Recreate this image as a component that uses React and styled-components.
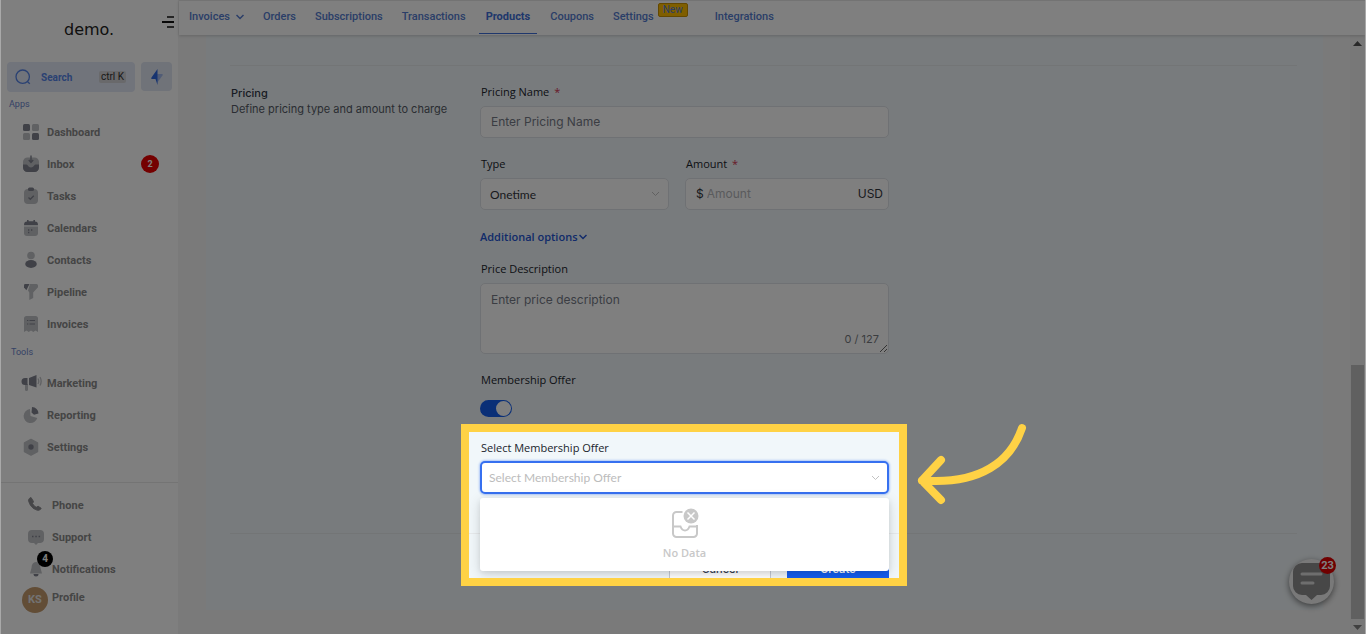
import React from "react";
import styled, { createGlobalStyle } from "styled-components";

const roboto = `Roboto, "Liberation Sans", sans-serif`;
const inter = `Inter, Roboto, sans-serif`;
const openSans = `"Open Sans", "Noto Sans", sans-serif`;
const lato = `Lato, "Open Sans", sans-serif`;

const Global = createGlobalStyle`
  *, *::before, *::after { box-sizing: border-box; }
  body { margin: 0; background: #a9a9a9; font-family: ${roboto}; }
  button, input, select, textarea { font: inherit; margin: 0; }
  ul { list-style: none; margin: 0; padding: 0; }
  a { color: inherit; text-decoration: none; }
`;

const Page = styled.div`
  position: relative;
  display: flex;
  min-height: 100vh;
  margin: 0 1px;
  overflow: hidden;
  background: #f5f5f5;
`;

/* ---------- sidebar ---------- */
const Sidebar = styled.aside`
  flex: none;
  width: 178px;
  display: flex;
  flex-direction: column;
  background: #fff;
  border-right: 1px solid #f4f4f4;
`;
const Brand = styled.header`
  display: flex;
  justify-content: space-between;
  height: 62px;
  padding: 15px 4px 0 63px;
`;
const Logo = styled.a`
  height: 28px;
  font: 16px/30px "DejaVu Sans", sans-serif;
  color: #222;
`;
const MenuButton = styled.button`
  width: 12px;
  height: 14px;
  padding: 0;
  border: 0;
  background: none;
  svg { display: block; }
`;
const SearchRow = styled.div`
  display: flex;
  gap: 6px;
  padding: 0 6px;
`;
const SearchButton = styled.button`
  display: flex;
  align-items: center;
  width: 128px;
  height: 30px;
  padding: 0 9px 0 8px;
  border: 0;
  border-radius: 4px;
  background: #e2e8f6;
  color: #5583e6;
  font-size: 10px;
  font-weight: 700;
  span { margin-left: 10px; }
`;
const Shortcut = styled.kbd`
  margin-left: auto;
  padding: 0 2px;
  border-radius: 2px;
  background: #d2d2d6;
  color: #333;
  font: 10px/12px ${roboto};
`;
const QuickButton = styled.button`
  display: flex;
  align-items: center;
  justify-content: center;
  width: 31px;
  height: 29px;
  padding: 0;
  border: 0;
  border-radius: 4px;
  background: #e0e6f2;
`;
const GroupLabel = styled.h2`
  margin: 0;
  padding: 0 0 ${(p) => p.$below || 0}px ${(p) => p.$indent}px;
  font-size: 9px;
  line-height: 24px;
  font-weight: 400;
  color: #6b85cc;
`;
const NavItem = styled.a`
  position: relative;
  display: flex;
  align-items: center;
  gap: 5px;
  height: 32px;
  padding-left: 19px;
  font-size: 11px;
  font-weight: 700;
  color: #8a8a8a;
  svg { flex: none; }
`;
const CountBadge = styled.span`
  margin: 0 19px 0 auto;
  width: 18px;
  height: 18px;
  border-radius: 9px;
  background: #e80000;
  color: #fff;
  font-size: 9px;
  line-height: 18px;
  text-align: center;
`;
const Spacer = styled.div`
  height: 19px;
`;
const Footer = styled.footer`
  padding: 6px 0 0 5px;
  border-top: 1px solid #e8e8e8;
`;
const BellCount = styled.span`
  position: absolute;
  left: 31px;
  top: -2px;
  width: 16px;
  height: 16px;
  border-radius: 8px;
  background: #000;
  color: #fff;
  font-size: 10px;
  line-height: 16px;
  text-align: center;
`;
const ProfileLink = styled.a`
  display: flex;
  gap: 4px;
  padding-left: 16px;
  font-size: 11px;
  line-height: 26px;
  font-weight: 700;
  color: #8a8a8a;
`;
const Avatar = styled.span`
  width: 26px;
  height: 26px;
  margin-top: 2px;
  border-radius: 13px;
  background: #c49a6c;
  color: #e6e6e6;
  line-height: 26px;
  text-align: center;
`;

/* ---------- top tabs ---------- */
const Main = styled.main`
  flex: 1;
  min-width: 0;
  display: flex;
  flex-direction: column;
`;
const Tabs = styled.nav`
  position: relative;
  z-index: 1;
  display: flex;
  gap: 7px;
  height: 35px;
  padding-left: 4px;
  border-top: 1px solid #e6e6e6;
  background: #fff;
  box-shadow: 0 1px 3px rgba(0, 0, 0, 0.18);
`;
const Tab = styled.a`
  display: flex;
  align-items: flex-start;
  height: 33px;
  padding: 0 ${(p) => (p.$active ? 7 : 6)}px;
  border-bottom: 1px solid ${(p) => (p.$active ? "#3f6fd8" : "transparent")};
  font-size: 11px;
  line-height: 31px;
  font-weight: ${(p) => (p.$active ? 700 : 500)};
  color: ${(p) => (p.$active ? "#3f6fd8" : "#557cd0")};
  svg { margin: 13px 0 0 6px; }
`;
const NewTag = styled.span`
  height: 14px;
  margin: 2px 8px 0 4px;
  padding: 0 4px;
  border: 1px solid #c89000;
  border-radius: 2px;
  background: #ffbc00;
  font-size: 10px;
  line-height: 12px;
  font-weight: 400;
`;

/* ---------- content ---------- */
const Viewport = styled.div`
  flex: 1;
  display: flex;
`;
const Panel = styled.section`
  flex: 1;
  align-self: flex-start;
  min-width: 0;
  margin: 0 27px;
  padding: 30px 26px 24px 24px;
  background: #f1f7fa;
`;
const Columns = styled.div`
  display: grid;
  grid-template-columns: 250px minmax(0, 409px);
  padding-top: ${(p) => p.$top}px;
  border-top: 1px solid #e7eaec;
`;
const Intro = styled.div`
  padding-left: 1px;
  font: 11px/16px ${inter};
  color: #555b66;
  h3 { margin: 1px 0 0; font-size: 11px; font-weight: 500; color: #333a48; }
  p { margin: 0; }
`;
const Form = styled.form`
  padding-bottom: 39px;
`;
const Field = styled.div`
  position: relative;
  margin-bottom: ${(p) => (p.$last ? 0 : 18)}px;
`;
const Pair = styled.div`
  display: grid;
  grid-template-columns: minmax(0, 189fr) minmax(0, 204fr);
  gap: 16px;
`;
const Label = styled.label`
  display: block;
  margin-bottom: ${(p) => p.$gap || 6}px;
  padding-left: 1px;
  font: 11px/16px ${openSans};
  color: #20242c;
  em { margin-left: 2px; color: #d03050; font-style: normal; }
`;
const box = `
  width: 100%;
  border: 1px solid #dfe2e8;
  border-radius: 5px;
  background: #fff;
  outline: none;
`;
const TextInput = styled.input`
  ${box}
  display: block;
  height: 32px;
  padding: 0 10px 2px;
  font: 12px/16px ${inter};
  &::placeholder { color: #767b87; opacity: 1; }
`;
const SelectWrap = styled.div`
  position: relative;
  svg { position: absolute; right: 9px; top: 50%; margin-top: -3px; pointer-events: none; }
`;
const Select = styled.select`
  ${box}
  display: block;
  appearance: none;
  height: ${(p) => (p.$focused ? 33 : 32)}px;
  padding: 1px 9px 0;
  font: 12px/18px ${lato};
  color: ${(p) => (p.$focused ? "#bcbcbc" : "#33363d")};
  ${(p) => p.$focused && `
    padding: 1px 7px 0;
    border: 2px solid #3670f0;
    box-shadow: 0 0 2px 1px rgba(21, 94, 239, 0.3);
  `}
`;
const AmountBox = styled.div`
  ${box}
  display: flex;
  align-items: center;
  gap: 3px;
  height: 32px;
  padding: 0 5px 0 10px;
  font: 12px/16px ${inter};
  color: #33363d;
  input {
    flex: 1;
    min-width: 0;
    padding: 0;
    border: 0;
    outline: 0;
    background: none;
    &::placeholder { color: #b4b6ba; opacity: 1; }
  }
`;
const OptionsButton = styled.button`
  display: flex;
  align-items: center;
  gap: 1px;
  height: 18px;
  margin-bottom: 15px;
  padding: 0;
  border: 0;
  background: none;
  font: 600 11px/18px ${openSans};
  color: #2456d4;
`;
const TextArea = styled.textarea`
  ${box}
  display: block;
  height: 71px;
  padding: 8px 10px;
  resize: vertical;
  font: 12px/16px ${inter};
  &::placeholder { color: #767b87; opacity: 1; }
`;
const Counter = styled.span`
  position: absolute;
  right: 10px;
  bottom: 7px;
  font: 11px/16px ${inter};
  color: #777a80;
`;
const Toggle = styled.input`
  appearance: none;
  display: block;
  width: 32px;
  height: 17px;
  margin: 0 0 23px;
  padding: 1px;
  border-radius: 9px;
  background: #155eef;
  &::before {
    content: "";
    display: block;
    width: 15px;
    height: 15px;
    margin-left: auto;
    border-radius: 8px;
    background: #fff;
  }
`;
const Menu = styled.div`
  position: absolute;
  z-index: 2;
  top: calc(100% + 4px);
  left: 0;
  right: 0;
  display: flex;
  flex-direction: column;
  align-items: center;
  gap: 6px;
  height: 73px;
  padding-top: 10px;
  border-radius: 3px;
  background: #fff;
  box-shadow: 0 3px 14px rgba(0, 0, 0, 0.14), 0 2px 5px rgba(0, 0, 0, 0.08);
  font: 600 11px/16px ${openSans};
  color: #c8c8c8;
`;
const Actions = styled.div`
  grid-column: 2;
  display: flex;
  justify-content: flex-end;
  gap: 16px;
`;
const Action = styled.button`
  width: 102px;
  height: 32px;
  padding: 0 0 2px;
  border: 1px solid ${(p) => (p.$primary ? "#155eef" : "#c4cad4")};
  border-radius: 3px;
  background: ${(p) => (p.$primary ? "#155eef" : "#fff")};
  color: ${(p) => (p.$primary ? "#fff" : "#344054")};
  font: ${(p) => (p.$primary ? 600 : 500)} 11px/16px ${inter};
`;

/* the frame's huge spread shadow dims all that lies outside it */
const Spotlight = styled.div`
  position: absolute;
  z-index: 20;
  top: -16px;
  bottom: -92px;
  left: -19px;
  right: -18px;
  border: 8px solid #ffd245;
  box-shadow: 0 0 0 4000px rgba(0, 0, 0, 0.5);
  pointer-events: none;
`;
const Arrow = styled.svg`
  position: absolute;
  left: calc(100% + 18px);
  top: -10px;
`;

/* ---------- scrollbar and chat ---------- */
const Scrollbar = styled.div`
  display: flex;
  flex-direction: column;
  align-items: center;
  width: 15px;
  padding: 6px 0 3px;
  background: #f1f1f1;
`;
const Thumb = styled.div`
  width: 13px;
  height: 43%;
  margin: auto 0 6px;
  background: #c1c1c1;
`;
const Chat = styled.button`
  position: absolute;
  right: 31px;
  bottom: 30px;
  z-index: 5;
  width: 45px;
  height: 45px;
  padding: 0;
  border: 0;
  border-radius: 23px;
  background: #f2f2f2;
  box-shadow: 0 2px 6px rgba(0, 0, 0, 0.5);
  svg { display: block; }
`;
const ChatCount = styled.span`
  position: absolute;
  top: -2px;
  right: -2px;
  width: 17px;
  height: 17px;
  border-radius: 9px;
  background: #e00000;
  color: #fff;
  font-size: 11px;
  line-height: 17px;
  font-weight: 700;
  text-align: center;
`;

const D = "#80838f";
const L = "#c0c2c6";
const icons = {
  dashboard: <><rect x="3" y="3" width="7" height="7" rx="1.500" fill={D} /><rect x="12" y="3" width="7" height="7" rx="1.500" fill={L} /><rect x="3" y="12" width="7" height="7" rx="1.500" fill={L} /><rect x="12" y="12" width="7" height="7" rx="1.500" fill={D} /></>,
  inbox: <><rect x="3" y="4.500" width="16" height="14.500" rx="4.500" fill={L} /><path d="M3 11.500h3.500C8 11.500 8 14.500 11 14.500s3-3 4.500-3H19v3a4.500 4.500 0 0 1-4.500 4.500h-7A4.500 4.500 0 0 1 3 14.500z" fill={D} /><path d="M11 2.500v6.500M8.800 7 11 9.500 13.200 7" fill="none" stroke={D} strokeWidth="1.400" /></>,
  tasks: <><rect x="4" y="4" width="14" height="15" rx="4" fill={L} /><rect x="8" y="2.500" width="6" height="3.500" rx="1.500" fill={D} /><path d="m8.500 12.500 1.800 1.800 3.500-3.600" fill="none" stroke={D} strokeWidth="1.300" /></>,
  calendars: <><path d="M4 9.500h14V16a3 3 0 0 1-3 3H7a3 3 0 0 1-3-3z" fill={L} /><path d="M4 8.200C4 5.500 5 4.500 7 4.500V3h1.600v1.300h4.800V3H15v1.500c2 0 3 1 3 3.700z" fill={D} /><path d="M8 13h1.300M11 13h1.300M8 15.500h1.300" stroke={D} strokeWidth="1.300" /></>,
  contacts: <><circle cx="11" cy="6.500" r="3.800" fill={L} /><ellipse cx="11" cy="15" rx="5.800" ry="3.900" fill={D} /></>,
  pipeline: <><path d="M10 3h6.500Q18 3 18 4.500v1.700L13.200 11.500V17L9.300 19v-7.500L8 9.500z" fill={L} /><path d="M9.500 3 6.400 9.200 4 6.500V4.200Q4 3 5.200 3z" fill={D} /></>,
  invoices: <><path d="M6.500 3h9A2.500 2.500 0 0 1 18 5.500V19l-2.500-1.500L13.300 19 11 17.500 8.700 19l-2.200-1.500L4 19V5.500A2.500 2.500 0 0 1 6.500 3z" fill={L} /><path d="M7 7.500h1.300M9.500 7.500H15M7 11h1.300M9.500 11H15" stroke={D} strokeWidth="1.200" /></>,
  marketing: <><path d="M8 12v5.500a1.500 1.500 0 0 1-3 0V12z" fill={L} /><path d="M7.500 6v7H5a3.500 3.500 0 0 1 0-7zM9 6l7.500-3v12.500L9 13z" fill={D} /><path d="M18 6.500q1.500 2.700 0 5.500M20 5q2.300 4.200 0 8.500" fill="none" stroke={L} strokeWidth="1.300" /></>,
  reporting: <><path d="M10 5a7 7 0 1 0 7.300 9L10.500 12z" fill={L} /><path d="M12 3a7 6.500 0 0 1 6.500 6.500l-4.500 1.200-2.500-2.200z" fill={D} /></>,
  settings: <><path d="m11 3.500 6.500 3.500v8.500L11 19l-6.500-3.500V7z" fill={L} stroke={L} strokeWidth="1.500" strokeLinejoin="round" /><circle cx="11" cy="11" r="2.700" fill={D} /></>,
  phone: <path transform="translate(-1 -1)" d="M7 4.500 9.500 8.500 8.500 10.500q1.500 3 3.700 3.800l2-1 3 2q-1.200 2.400-3.500 2C8.500 16 5.500 12 4.500 7.200Q5 5 7 4.500z" fill="#8c8c90" stroke="#8c8c90" strokeLinejoin="round" />,
  support: <><path d="M7 4h8a4 4 0 0 1 4 4v5a4 4 0 0 1-3.500 4H13l-2 2-2-2H7a4 4 0 0 1-4-4V8a4 4 0 0 1 4-4z" fill={L} /><path d="M7 10.500h1.500M10.300 10.500h1.500M13.600 10.500h1.500" stroke={D} strokeWidth="1.500" /></>,
  bell: <><path d="M11 4q4.500.500 4.500 6l1.500 5.500H5L6.500 10q0-5.500 4.500-6z" fill={L} /><path d="M8.500 16h5a2.500 2.500 0 0 1-5 0z" fill={D} /></>,
};
const Icon = ({ name }) => (
  <svg width="22" height="22" viewBox="0 0 22 22" aria-hidden="true">{icons[name]}</svg>
);
const Chevron = ({ color, width = 8, weight = 1.5 }) => (
  <svg width={width} height="6" viewBox="0 0 8 6" fill="none" stroke={color} strokeWidth={weight} aria-hidden="true">
    <path d="m.5 1 3.500 3.500L7.500 1" />
  </svg>
);

const apps = ["Dashboard", "Inbox", "Tasks", "Calendars", "Contacts", "Pipeline", "Invoices"];
const tools = ["Marketing", "Reporting", "Settings"];

export default function App() {
  return (
    <Page>
      <Global />
      <Sidebar>
        <Brand>
          <Logo href="#">demo.</Logo>
          <MenuButton aria-label="Collapse menu">
            <svg width="12" height="14" viewBox="0 0 12 14" stroke="#111" strokeWidth="2"><path d="M0 7h12" /><path d="M5 2h7M5 12h7" strokeWidth="1.500" /></svg>
          </MenuButton>
        </Brand>
        <SearchRow>
          <SearchButton>
            <svg width="16" height="16" viewBox="0 0 16 16" fill="none" stroke="#5583e6" strokeWidth="1.300"><circle cx="7.700" cy="7.700" r="6.700" /><path d="m12.600 12.800 2.200 2" /></svg>
            <span>Search</span>
            <Shortcut>ctrl K</Shortcut>
          </SearchButton>
          <QuickButton aria-label="Quick actions">
            <svg width="14" height="16" viewBox="0 0 14 16"><path d="M7 5h5q1.500 0 .5 1.500L7 14z" fill="#a3b9ec" /><path d="M7.500 0v16L5.500 10H2Q.5 10 1.500 8.500z" fill="#2f68e0" /></svg>
          </QuickButton>
        </SearchRow>
        <GroupLabel $indent={8}>Apps</GroupLabel>
        <ul>
          {apps.map((a) => (
            <li key={a}>
              <NavItem href="#"><Icon name={a.toLowerCase()} />{a}{a === "Inbox" && <CountBadge>2</CountBadge>}</NavItem>
            </li>
          ))}
        </ul>
        <GroupLabel $indent={10} $below={3}>Tools</GroupLabel>
        <ul>
          {tools.map((t) => (
            <li key={t}><NavItem href="#"><Icon name={t.toLowerCase()} />{t}</NavItem></li>
          ))}
        </ul>
        <Spacer />
        <Footer>
          <NavItem href="#"><Icon name="phone" />Phone</NavItem>
          <NavItem href="#"><Icon name="support" />Support</NavItem>
          <NavItem href="#"><Icon name="bell" />Notifications<BellCount>4</BellCount></NavItem>
          <ProfileLink href="#"><Avatar>KS</Avatar>Profile</ProfileLink>
        </Footer>
      </Sidebar>

      <Main>
        <Tabs>
          <Tab href="#">Invoices<Chevron color="#557cd0" /></Tab>
          <Tab href="#">Orders</Tab>
          <Tab href="#">Subscriptions</Tab>
          <Tab href="#">Transactions</Tab>
          <Tab href="#" $active>Products</Tab>
          <Tab href="#">Coupons</Tab>
          <Tab href="#">Settings<NewTag>New</NewTag></Tab>
          <Tab href="#">Integrations</Tab>
        </Tabs>
        <Viewport>
          <Panel>
            <Columns $top={18}>
              <Intro>
                <h3>Pricing</h3>
                <p>Define pricing type and amount to charge</p>
              </Intro>
              <Form>
                <Field>
                  <Label htmlFor="name">Pricing Name <em>*</em></Label>
                  <TextInput id="name" placeholder="Enter Pricing Name" />
                </Field>
                <Pair>
                  <Field>
                    <Label htmlFor="type">Type</Label>
                    <SelectWrap>
                      <Select id="type"><option>Onetime</option></Select>
                      <Chevron color="#c2c2c2" width={9} weight={1} />
                    </SelectWrap>
                  </Field>
                  <Field>
                    <Label htmlFor="amount">Amount <em>*</em></Label>
                    <AmountBox>$<input id="amount" placeholder="Amount" />USD</AmountBox>
                  </Field>
                </Pair>
                <OptionsButton type="button">Additional options<Chevron color="#2456d4" /></OptionsButton>
                <Field>
                  <Label htmlFor="description">Price Description</Label>
                  <TextArea id="description" placeholder="Enter price description" />
                  <Counter>0 / 127</Counter>
                </Field>
                <Label htmlFor="membership" $gap={12}>Membership Offer</Label>
                <Toggle id="membership" type="checkbox" role="switch" defaultChecked />
                <Field $last>
                  <Label htmlFor="offer" $gap={5}>Select Membership Offer</Label>
                  <SelectWrap>
                    <Select id="offer" $focused><option>Select Membership Offer</option></Select>
                    <Chevron color="#c2c2c2" width={9} weight={1} />
                  </SelectWrap>
                  <Menu>
                    <svg width="30" height="31" viewBox="0 0 30 31" fill="none" stroke="#c8c8c8" strokeWidth="2" aria-hidden="true">
                      <path d="M12.500 4H6.500A3.500 3.500 0 0 0 3 7.500v18A3.500 3.500 0 0 0 6.500 29h17a3.500 3.500 0 0 0 3.500-3.500V17M3 18.500h7.500q1.500 4 4.500 4t4.500-4H27" />
                      <circle cx="21" cy="8" r="7.500" fill="#c8c8c8" stroke="none" />
                      <path d="m17.500 4.500 7 7m0-7-7 7" stroke="#fff" strokeWidth="1.500" />
                    </svg>
                    No Data
                  </Menu>
                  <Spotlight>
                    <Arrow width="114" height="84" viewBox="0 0 114 84" fill="none" stroke="#ffd245" strokeWidth="8" strokeLinecap="round" strokeLinejoin="round" aria-hidden="true">
                      <path d="M105 6C94 39 64 63 5 58.500M24 38 5 58.500 24 78" />
                    </Arrow>
                  </Spotlight>
                </Field>
              </Form>
            </Columns>
            <Columns $top={20}>
              <Actions>
                <Action type="button">Cancel</Action>
                <Action type="button" $primary>Create</Action>
              </Actions>
            </Columns>
          </Panel>
          <Scrollbar>
            <svg width="9" height="6" viewBox="0 0 9 6"><path d="M4.500 0 9 5H0z" fill="#505050" /></svg>
            <Thumb />
            <svg width="9" height="6" viewBox="0 0 9 6"><path d="M4.500 5 9 0H0z" fill="#808080" /></svg>
          </Scrollbar>
        </Viewport>
      </Main>

      <Chat aria-label="Open chat">
        <svg width="45" height="45" viewBox="0 0 45 45">
          <path d="M13 4h19a9 9 0 0 1 9 9v14a9 9 0 0 1-9 9h-4l-5.500 5L17 36h-4a9 9 0 0 1-9-9V13a9 9 0 0 1 9-9z" fill="#8e8e8e" />
          <path d="M13 15h19M13 24h11" stroke="#ddd" strokeWidth="3" strokeLinecap="round" />
        </svg>
        <ChatCount>23</ChatCount>
      </Chat>
    </Page>
  );
}
